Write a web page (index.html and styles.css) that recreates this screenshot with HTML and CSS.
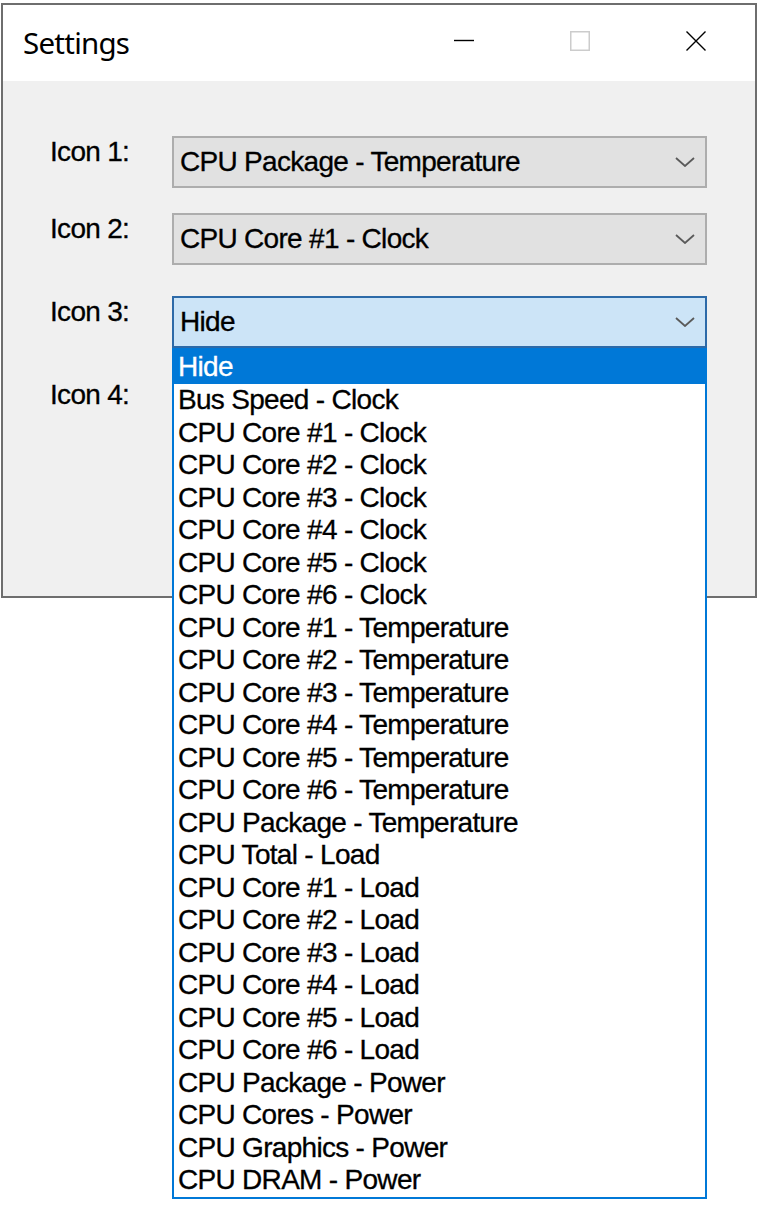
FILE: index.html
```html
<!DOCTYPE html>
<html>
<head>
<meta charset="utf-8">
<title>Settings</title>
<link rel="stylesheet" href="styles.css">
</head>
<body>
<div class="window">
  <div class="titlebar">
    <div class="title">Settings</div>
    <div class="caption-buttons">
      <div class="cap-btn"><svg width="20" height="20" viewBox="0 0 20 20"><line x1="0" y1="9.5" x2="20" y2="9.5" stroke="#000" stroke-width="1.4"/></svg></div>
      <div class="cap-btn"><svg width="20" height="20" viewBox="0 0 20 20"><rect x="0.75" y="0.75" width="18.5" height="18.5" fill="none" stroke="#cccccc" stroke-width="1.5"/></svg></div>
      <div class="cap-btn"><svg width="20" height="20" viewBox="0 0 20 20"><path d="M0.5 0.5 L19.5 19.5 M19.5 0.5 L0.5 19.5" stroke="#000" stroke-width="1.4" fill="none"/></svg></div>
    </div>
  </div>
  <div class="content">
    <div class="form">
      <div class="row">
        <div class="label">Icon 1:</div>
        <div class="combo"><span class="combo-text">CPU Package - Temperature</span><svg class="chev" width="20" height="10" viewBox="0 0 20 10"><polyline points="1,1 10,9 19,1" fill="none" stroke="#5a5a5a" stroke-width="1.8"/></svg></div>
      </div>
      <div class="row">
        <div class="label">Icon 2:</div>
        <div class="combo"><span class="combo-text">CPU Core #1 - Clock</span><svg class="chev" width="20" height="10" viewBox="0 0 20 10"><polyline points="1,1 10,9 19,1" fill="none" stroke="#5a5a5a" stroke-width="1.8"/></svg></div>
      </div>
      <div class="row">
        <div class="label">Icon 3:</div>
        <div class="combo combo-focus"><span class="combo-text">Hide</span><svg class="chev" width="20" height="10" viewBox="0 0 20 10"><polyline points="1,1 10,9 19,1" fill="none" stroke="#5a5a5a" stroke-width="1.8"/></svg>
          <ul class="droplist">
            <li class="selected">Hide</li>
            <li>Bus Speed - Clock</li>
            <li>CPU Core #1 - Clock</li>
            <li>CPU Core #2 - Clock</li>
            <li>CPU Core #3 - Clock</li>
            <li>CPU Core #4 - Clock</li>
            <li>CPU Core #5 - Clock</li>
            <li>CPU Core #6 - Clock</li>
            <li>CPU Core #1 - Temperature</li>
            <li>CPU Core #2 - Temperature</li>
            <li>CPU Core #3 - Temperature</li>
            <li>CPU Core #4 - Temperature</li>
            <li>CPU Core #5 - Temperature</li>
            <li>CPU Core #6 - Temperature</li>
            <li>CPU Package - Temperature</li>
            <li>CPU Total - Load</li>
            <li>CPU Core #1 - Load</li>
            <li>CPU Core #2 - Load</li>
            <li>CPU Core #3 - Load</li>
            <li>CPU Core #4 - Load</li>
            <li>CPU Core #5 - Load</li>
            <li>CPU Core #6 - Load</li>
            <li>CPU Package - Power</li>
            <li>CPU Cores - Power</li>
            <li>CPU Graphics - Power</li>
            <li>CPU DRAM - Power</li>
          </ul>
        </div>
      </div>
      <div class="row">
        <div class="label">Icon 4:</div>
        <div class="combo"><span class="combo-text"></span><svg class="chev" width="20" height="10" viewBox="0 0 20 10"><polyline points="1,1 10,9 19,1" fill="none" stroke="#5a5a5a" stroke-width="1.8"/></svg></div>
      </div>
    </div>
  </div>
</div>
</body>
</html>
```

FILE: styles.css
```css
* { box-sizing: border-box; }

html, body {
  min-height: 1220px;
}

body {
  margin: 0;
  background: #ffffff;
  font-family: "Liberation Sans", Arial, sans-serif;
  color: #000;
}

.window {
  position: relative;
  margin: 3px 0 0 1px;
  width: 756px;
  height: 595px;
  border: 2px solid #6e6e6e;
  display: flex;
  flex-direction: column;
  background: #fff;
}

.titlebar {
  height: 76px;
  display: flex;
  align-items: center;
  justify-content: space-between;
  background: #ffffff;
}

.title {
  font-family: "Noto Sans", "Open Sans", sans-serif;
  font-size: 29.5px;
  letter-spacing: -0.75px;
  padding-left: 20px;
  padding-bottom: 1px;
  color: #000;
}

.caption-buttons {
  display: flex;
  height: 100%;
  padding-right: 1px;
}

.cap-btn {
  width: 116px;
  display: flex;
  align-items: center;
  justify-content: center;
  padding-bottom: 5px;
}

.cap-btn svg { display: block; }

.content {
  flex: 1;
  background: #f0f0f0;
}

.form {
  padding: 55px 0 0 47px;
  display: flex;
  flex-direction: column;
  gap: 25px;
}

.row {
  display: flex;
  align-items: flex-start;
}

.row + .row + .row { margin-top: 6px; }

.label {
  width: 122px;
  font-size: 28px;
  letter-spacing: -0.7px;
  line-height: 32px;
  -webkit-text-stroke: 0.3px #000;
}

.combo {
  position: relative;
  width: 535px;
  height: 52px;
  border: 2px solid #adadad;
  background: #e1e1e1;
  display: flex;
  align-items: center;
  justify-content: space-between;
  padding: 0 10px 0 6px;
}

.combo-text {
  font-size: 28px;
  letter-spacing: -0.7px;
  line-height: 32px;
  white-space: nowrap;
  -webkit-text-stroke: 0.3px #000;
}

.chev { display: block; flex: none; }

.combo-focus {
  background: #cce4f7;
  border-color: #2d6aa8;
}

.droplist {
  position: absolute;
  left: -2px;
  top: 50px;
  width: 535px;
  margin: 0;
  padding: 0;
  list-style: none;
  background: #ffffff;
  border: 2px solid #0078d7;
  z-index: 10;
}

.droplist li {
  height: 32.5px;
  line-height: 32.5px;
  padding-left: 4px;
  font-size: 28px;
  letter-spacing: -0.7px;
  white-space: nowrap;
  color: #000;
  -webkit-text-stroke: 0.3px #000;
}

.droplist li.selected {
  height: 34px;
  line-height: 34px;
  background: #0078d7;
  color: #ffffff;
  -webkit-text-stroke: 0.3px #ffffff;
}
```
